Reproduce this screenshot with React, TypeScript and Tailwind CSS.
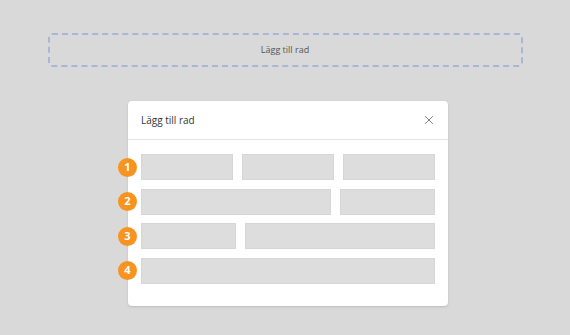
import {X} from "lucide-react";

const rows: {widths: (string | null)[]}[] = [
    {widths: [null, null, null]},
    {widths: ["w-[190px]", null]},
    {widths: ["w-[95px]", null]},
    {widths: [null]},
];

export default function App() {
    return (
        <div
            className="w-[570px] h-[335px] bg-[#d9d9d9] pt-[33px]"
            style={{fontFamily: '"Open Sans", "Liberation Sans", sans-serif'}}
        >
            {/* Add row drop target */}
            <div className="mx-auto w-[475px] h-[34px] border-2 border-dashed border-[#a9b6d6] rounded-[4px] flex items-center justify-center">
                <span className="text-[9px] text-[#555]">Lägg till rad</span>
            </div>

            {/* Modal */}
            <div className="relative ml-[128px] mt-[34px] w-[320px] bg-white rounded-[4px] shadow-sm">
                <div className="h-[39px] pl-[13px] pr-[12px] flex items-center justify-between border-b border-[#e6e6e6]">
                    <span className="text-[10px] text-[#333]">Lägg till rad</span>
                    <X className="w-[14px] h-[14px] text-[#777]" strokeWidth={1.6} />
                </div>
                <div className="px-[13px] pt-[14px] pb-[22px] flex flex-col gap-[8.5px]">
                    {rows.map((row, i) => (
                        <div key={i} className="relative flex gap-[9px] h-[26px]">
                            <span className="absolute -left-[23px] top-[3.5px] w-[19px] h-[19px] rounded-full bg-[#f7931e] text-white text-[11px] font-bold flex items-center justify-center">
                                {i + 1}
                            </span>
                            {row.widths.map((w, j) => (
                                <div
                                    key={j}
                                    className={`${w ?? "flex-1"} h-full bg-[#dddddd] border border-[#d6d6d6]`}
                                />
                            ))}
                        </div>
                    ))}
                </div>
            </div>
        </div>
    );
}
